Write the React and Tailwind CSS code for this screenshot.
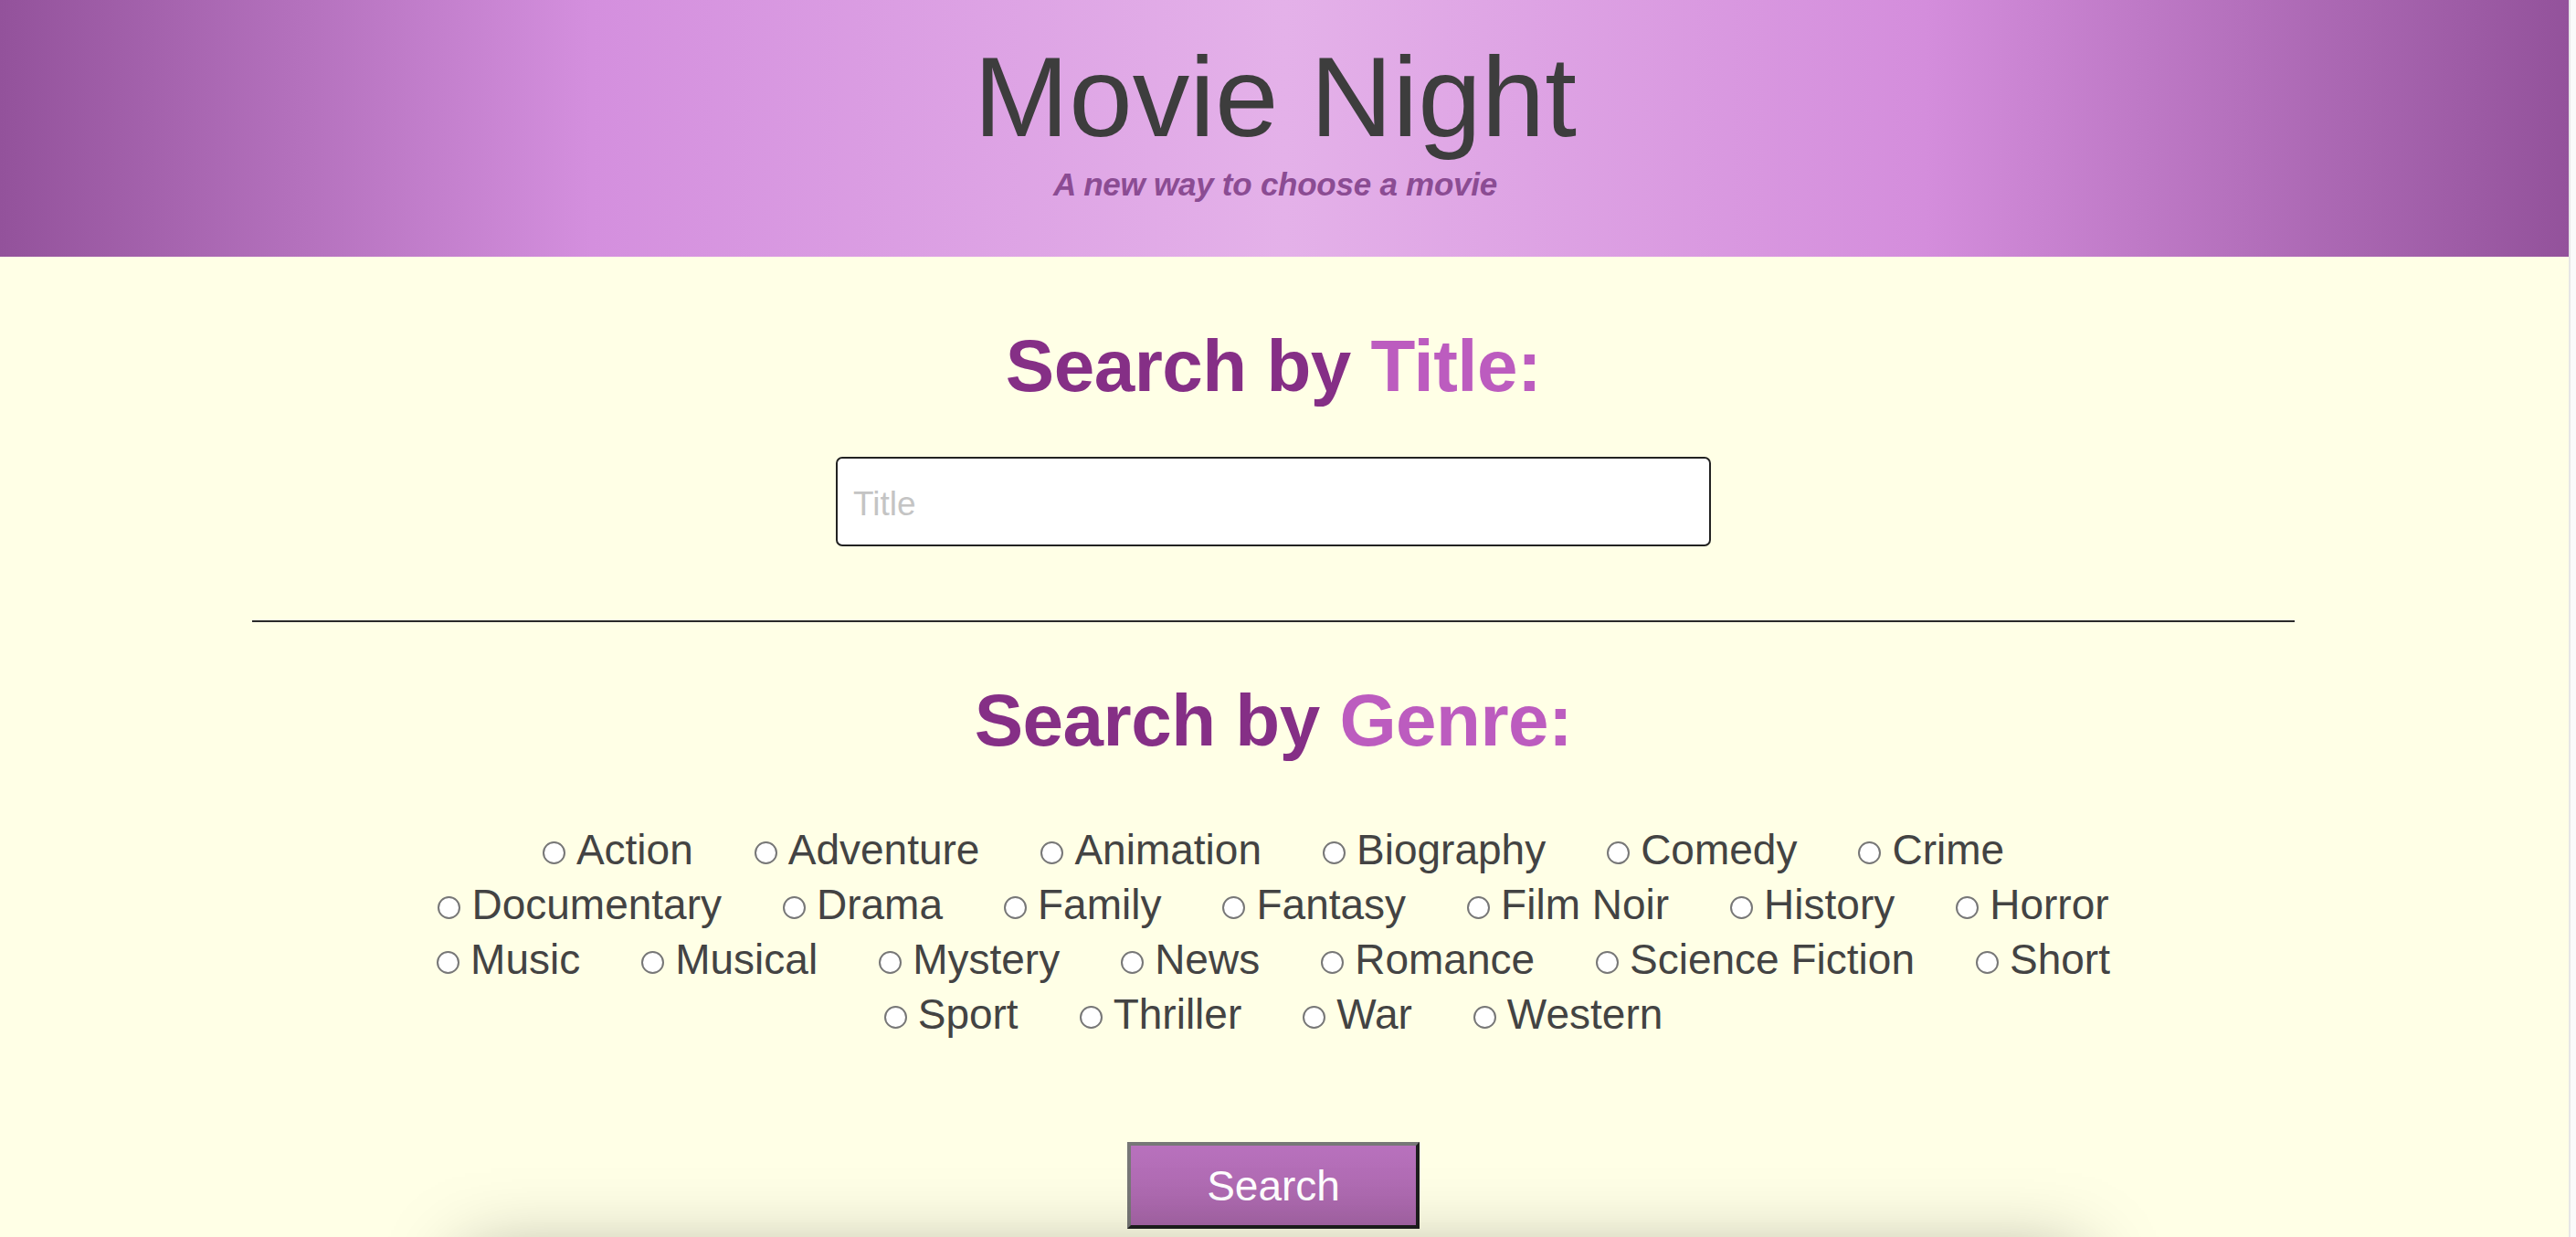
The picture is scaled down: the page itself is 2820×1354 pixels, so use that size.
import React from 'react';

const genreRows = [
  ['Action', 'Adventure', 'Animation', 'Biography', 'Comedy', 'Crime'],
  ['Documentary', 'Drama', 'Family', 'Fantasy', 'Film Noir', 'History', 'Horror'],
  ['Music', 'Musical', 'Mystery', 'News', 'Romance', 'Science Fiction', 'Short'],
  ['Sport', 'Thriller', 'War', 'Western'],
];

const GenreOption = ({ name }) => (
  <label className="flex items-center gap-[12px]">
    <input
      type="radio"
      name="genre"
      value={name}
      className="appearance-none w-[25px] h-[25px] mt-[6px] rounded-full border-2 border-[#777777] bg-white"
    />
    <span>{name}</span>
  </label>
);

const App = () => {
  return (
    <div className="h-[1354px] overflow-hidden flex flex-col bg-[#fafafa] font-['Liberation_Sans',Arial,sans-serif]">
      <div className="h-[2px] bg-[#dcdcdc]" />
      <div className="flex flex-1">
        <div className="w-[2812px] bg-[#ffffe6] flex flex-col">
          {/* header */}
          <header className="pt-[43px] pb-[62px] pr-[20px] flex flex-col items-center bg-[linear-gradient(to_right,#93529b_0%,#d48fde_23%,#e4b1e9_50%,#d48ddc_75%,#93529b_100%)]">
            <h1 className="text-[125px] leading-none text-[#3d3d3d]">Movie Night</h1>
            <p className="mt-[16px] text-[35px] leading-none font-bold italic tracking-[-0.25px] text-[#8b4c93]">
              A new way to choose a movie
            </p>
          </header>

          <main className="pr-[24px] flex flex-col items-center">
            <h2 className="mt-[80px] text-[80px] leading-none font-bold tracking-[-0.5px] text-[#852f86]">
              Search by <span className="text-[#bc5cbf]">Title:</span>
            </h2>
            <input
              type="text"
              placeholder="Title"
              className="mt-[59px] w-[958px] h-[98px] bg-white border-2 border-[#222222] rounded-[7px] pl-[17px] pt-[5px] text-[37px] text-[#333] placeholder:text-[#c4c4c4] outline-none"
            />

            <div className="mt-[81px] h-[2px] w-[2236px] bg-[#2a2a2a]" />

            <h2 className="mt-[68px] text-[80px] leading-none font-bold tracking-[-0.5px] text-[#852f86]">
              Search by <span className="text-[#bc5cbf]">Genre:</span>
            </h2>

            <div className="mt-[71px] flex flex-col items-center text-[46px] leading-[60px] text-[#434343]">
              {genreRows.map((row, i) => (
                <div key={i} className="flex justify-center gap-x-[67px]">
                  {row.map((g) => (
                    <GenreOption key={g} name={g} />
                  ))}
                </div>
              ))}
            </div>

            <button className="mt-[110px] w-[320px] h-[95px] border-4 border-t-[#777777] border-l-[#777777] border-r-[#1e1e1e] border-b-[#1e1e1e] bg-[linear-gradient(to_bottom,#b871bd,#a866a9)] text-white text-[46px] leading-none">
              Search
            </button>

            <div className="mt-[30px] w-[1770px] h-[300px] shrink-0 bg-[#ffffe6] shadow-[0_0_80px_rgba(0,0,0,0.35)]" />
          </main>
        </div>
        <div className="flex-1 border-l-2 border-[#e6e6e6] bg-[#fafafa]" />
      </div>
    </div>
  );
};

export default App;
